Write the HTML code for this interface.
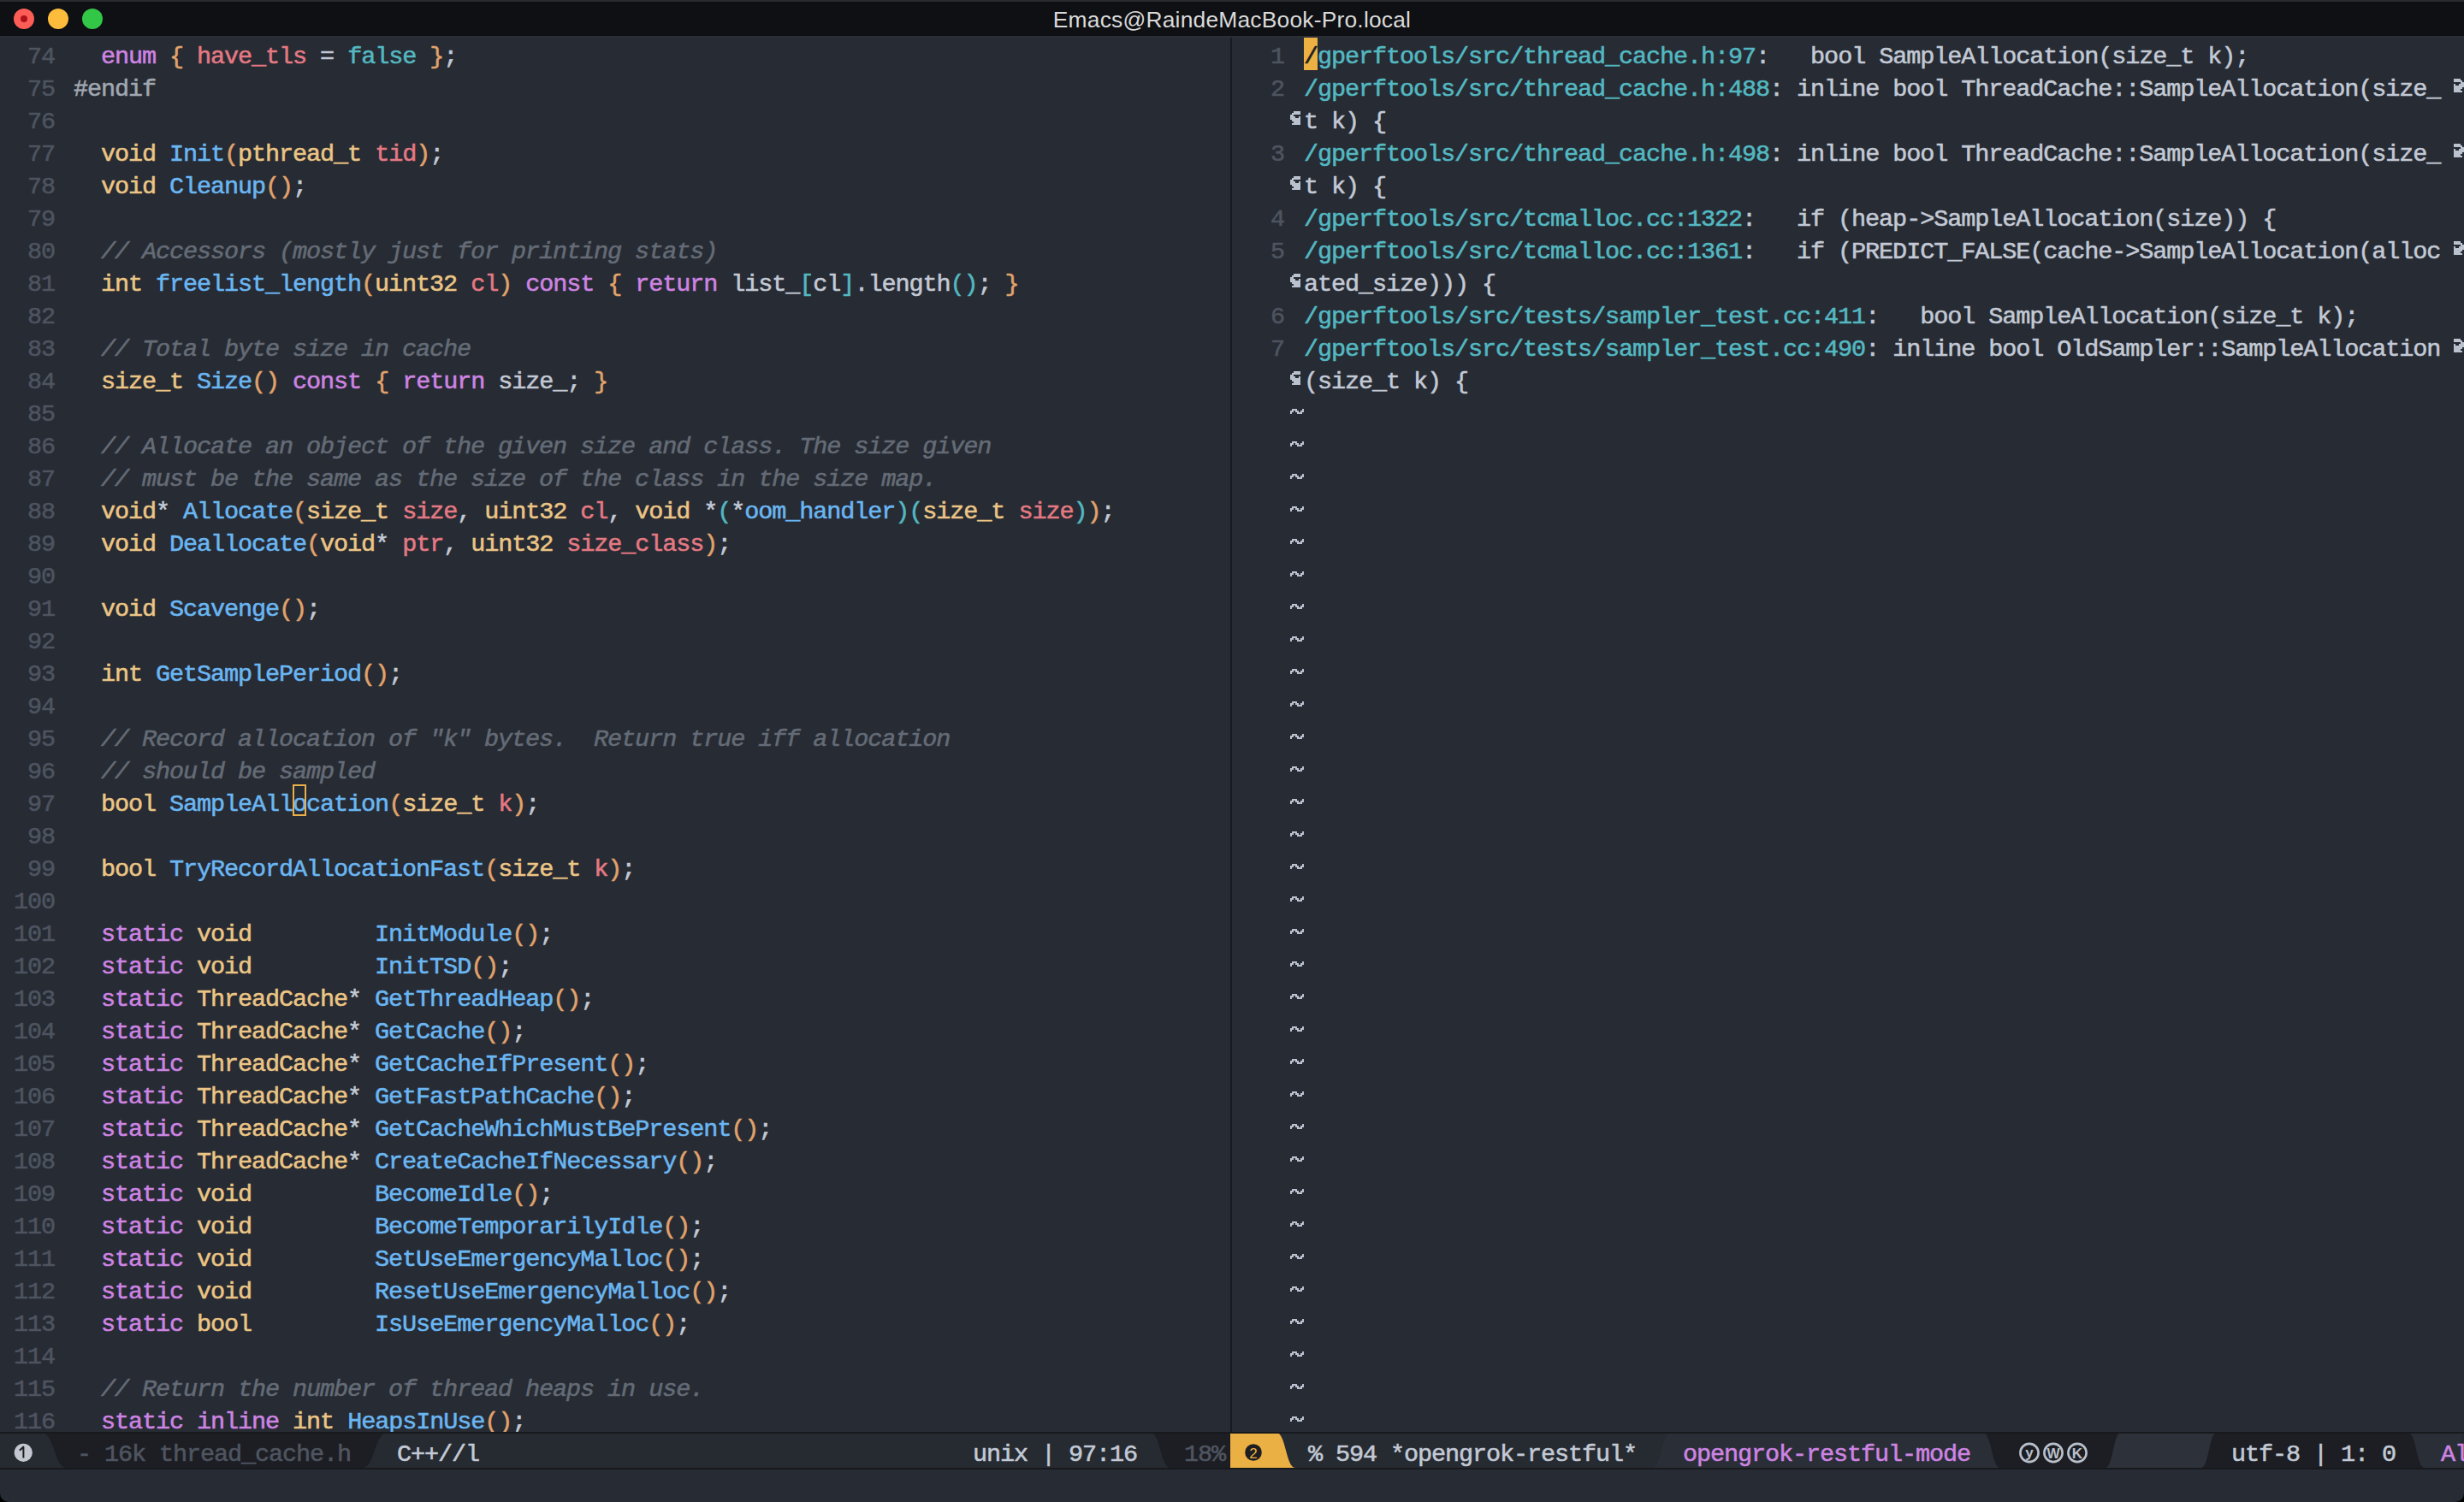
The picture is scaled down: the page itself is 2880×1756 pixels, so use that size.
<!DOCTYPE html>
<html><head><meta charset="utf-8">
<style>
html,body{margin:0;padding:0;}
body{width:2880px;height:1756px;overflow:hidden;background:#272b33;position:relative;font-family:"Liberation Mono",monospace;}
#title{position:absolute;left:0;top:0;width:2880px;height:42px;background:#0f1013;border-top:2px solid #2a2b2f;box-sizing:border-box;}
#title .tt{position:absolute;left:0;width:2880px;top:0px;height:42px;line-height:42px;text-align:center;font-family:"Liberation Sans",sans-serif;font-size:26.4px;letter-spacing:0.2px;color:#dadada;}
.tl{position:absolute;top:8px;width:24px;height:24px;border-radius:50%;}
.row,.ln,.mlt{position:absolute;height:38px;line-height:38px;white-space:pre;font-size:28.5px;letter-spacing:-1.1px;color:#c2c9d5;-webkit-text-stroke:0.55px currentColor;}
.ln{color:#4d5460;}
.mlt{top:1681.5px;}
.dim{color:#4f5560;}
.mag{color:#cd84e2;}
i{font-style:normal;}
.k{color:#cd84e2}.t{color:#ebc585}.f{color:#6ab6f2}.v{color:#e47983}.c{color:#53b8c1}
.o{color:#e0a36c}.g{color:#53b8c1}.m{color:#646b76;font-style:italic}.pp{color:#a0a7b1}
.cur{color:#6ab6f2;}
.rc{color:#1c1f24;}
.bm{position:absolute;}
#split{position:absolute;left:1438px;top:42px;width:2px;height:1632px;background:#171a21;}
#tline{position:absolute;left:0;top:42px;width:2880px;height:2px;background:#2b2e36;}
#echo{position:absolute;left:0;top:1718px;width:2880px;height:38px;background:#272b33;}
</style></head><body>
<div id="title"><div class="tl" style="left:16px;background:#fd5d57"><div style="position:absolute;left:8px;top:8px;width:8px;height:8px;border-radius:50%;background:#b0121a"></div></div><div class="tl" style="left:56px;background:#fdbc3c"></div><div class="tl" style="left:96px;background:#33c748"></div><div class="tt">Emacs@RaindeMacBook-Pro.local</div></div>
<div style="position:absolute;left:1524px;top:44px;width:16px;height:38px;background:#ecb142"></div>
<div class="ln" style="top:48px;left:16px"> 74</div>
<div class="row" style="top:48px;left:86px">  <i class="k">enum</i> <i class="o">{</i> <i class="v">have_tls</i> = <i class="c">false</i> <i class="o">}</i>;</div>
<div class="ln" style="top:86px;left:16px"> 75</div>
<div class="row" style="top:86px;left:86px"><i class="pp">#endif</i></div>
<div class="ln" style="top:124px;left:16px"> 76</div>
<div class="ln" style="top:162px;left:16px"> 77</div>
<div class="row" style="top:162px;left:86px">  <i class="t">void</i> <i class="f">Init</i><i class="o">(</i><i class="t">pthread_t</i> <i class="v">tid</i><i class="o">)</i>;</div>
<div class="ln" style="top:200px;left:16px"> 78</div>
<div class="row" style="top:200px;left:86px">  <i class="t">void</i> <i class="f">Cleanup</i><i class="o">()</i>;</div>
<div class="ln" style="top:238px;left:16px"> 79</div>
<div class="ln" style="top:276px;left:16px"> 80</div>
<div class="row" style="top:276px;left:86px">  <i class="m">// Accessors (mostly just for printing stats)</i></div>
<div class="ln" style="top:314px;left:16px"> 81</div>
<div class="row" style="top:314px;left:86px">  <i class="t">int</i> <i class="f">freelist_length</i><i class="o">(</i><i class="t">uint32</i> <i class="v">cl</i><i class="o">)</i> <i class="k">const</i> <i class="o">{</i> <i class="k">return</i> list_<i class="g">[</i>cl<i class="g">]</i>.length<i class="g">()</i>; <i class="o">}</i></div>
<div class="ln" style="top:352px;left:16px"> 82</div>
<div class="ln" style="top:390px;left:16px"> 83</div>
<div class="row" style="top:390px;left:86px">  <i class="m">// Total byte size in cache</i></div>
<div class="ln" style="top:428px;left:16px"> 84</div>
<div class="row" style="top:428px;left:86px">  <i class="t">size_t</i> <i class="f">Size</i><i class="o">()</i> <i class="k">const</i> <i class="o">{</i> <i class="k">return</i> size_; <i class="o">}</i></div>
<div class="ln" style="top:466px;left:16px"> 85</div>
<div class="ln" style="top:504px;left:16px"> 86</div>
<div class="row" style="top:504px;left:86px">  <i class="m">// Allocate an object of the given size and class. The size given</i></div>
<div class="ln" style="top:542px;left:16px"> 87</div>
<div class="row" style="top:542px;left:86px">  <i class="m">// must be the same as the size of the class in the size map.</i></div>
<div class="ln" style="top:580px;left:16px"> 88</div>
<div class="row" style="top:580px;left:86px">  <i class="t">void</i>* <i class="f">Allocate</i><i class="o">(</i><i class="t">size_t</i> <i class="v">size</i>, <i class="t">uint32</i> <i class="v">cl</i>, <i class="t">void</i> *<i class="g">(</i>*<i class="f">oom_handler</i><i class="g">)(</i><i class="t">size_t</i> <i class="v">size</i><i class="g">)</i><i class="o">)</i>;</div>
<div class="ln" style="top:618px;left:16px"> 89</div>
<div class="row" style="top:618px;left:86px">  <i class="t">void</i> <i class="f">Deallocate</i><i class="o">(</i><i class="t">void</i>* <i class="v">ptr</i>, <i class="t">uint32</i> <i class="v">size_class</i><i class="o">)</i>;</div>
<div class="ln" style="top:656px;left:16px"> 90</div>
<div class="ln" style="top:694px;left:16px"> 91</div>
<div class="row" style="top:694px;left:86px">  <i class="t">void</i> <i class="f">Scavenge</i><i class="o">()</i>;</div>
<div class="ln" style="top:732px;left:16px"> 92</div>
<div class="ln" style="top:770px;left:16px"> 93</div>
<div class="row" style="top:770px;left:86px">  <i class="t">int</i> <i class="f">GetSamplePeriod</i><i class="o">()</i>;</div>
<div class="ln" style="top:808px;left:16px"> 94</div>
<div class="ln" style="top:846px;left:16px"> 95</div>
<div class="row" style="top:846px;left:86px">  <i class="m">// Record allocation of &quot;k&quot; bytes.  Return true iff allocation</i></div>
<div class="ln" style="top:884px;left:16px"> 96</div>
<div class="row" style="top:884px;left:86px">  <i class="m">// should be sampled</i></div>
<div class="ln" style="top:922px;left:16px"> 97</div>
<div class="row" style="top:922px;left:86px">  <i class="t">bool</i> <i class="f">SampleAll</i><i class="cur">o</i><i class="f">cation</i><i class="o">(</i><i class="t">size_t</i> <i class="v">k</i><i class="o">)</i>;</div>
<div class="ln" style="top:960px;left:16px"> 98</div>
<div class="ln" style="top:998px;left:16px"> 99</div>
<div class="row" style="top:998px;left:86px">  <i class="t">bool</i> <i class="f">TryRecordAllocationFast</i><i class="o">(</i><i class="t">size_t</i> <i class="v">k</i><i class="o">)</i>;</div>
<div class="ln" style="top:1036px;left:16px">100</div>
<div class="ln" style="top:1074px;left:16px">101</div>
<div class="row" style="top:1074px;left:86px">  <i class="k">static</i> <i class="t">void</i>         <i class="f">InitModule</i><i class="o">()</i>;</div>
<div class="ln" style="top:1112px;left:16px">102</div>
<div class="row" style="top:1112px;left:86px">  <i class="k">static</i> <i class="t">void</i>         <i class="f">InitTSD</i><i class="o">()</i>;</div>
<div class="ln" style="top:1150px;left:16px">103</div>
<div class="row" style="top:1150px;left:86px">  <i class="k">static</i> <i class="t">ThreadCache</i>* <i class="f">GetThreadHeap</i><i class="o">()</i>;</div>
<div class="ln" style="top:1188px;left:16px">104</div>
<div class="row" style="top:1188px;left:86px">  <i class="k">static</i> <i class="t">ThreadCache</i>* <i class="f">GetCache</i><i class="o">()</i>;</div>
<div class="ln" style="top:1226px;left:16px">105</div>
<div class="row" style="top:1226px;left:86px">  <i class="k">static</i> <i class="t">ThreadCache</i>* <i class="f">GetCacheIfPresent</i><i class="o">()</i>;</div>
<div class="ln" style="top:1264px;left:16px">106</div>
<div class="row" style="top:1264px;left:86px">  <i class="k">static</i> <i class="t">ThreadCache</i>* <i class="f">GetFastPathCache</i><i class="o">()</i>;</div>
<div class="ln" style="top:1302px;left:16px">107</div>
<div class="row" style="top:1302px;left:86px">  <i class="k">static</i> <i class="t">ThreadCache</i>* <i class="f">GetCacheWhichMustBePresent</i><i class="o">()</i>;</div>
<div class="ln" style="top:1340px;left:16px">108</div>
<div class="row" style="top:1340px;left:86px">  <i class="k">static</i> <i class="t">ThreadCache</i>* <i class="f">CreateCacheIfNecessary</i><i class="o">()</i>;</div>
<div class="ln" style="top:1378px;left:16px">109</div>
<div class="row" style="top:1378px;left:86px">  <i class="k">static</i> <i class="t">void</i>         <i class="f">BecomeIdle</i><i class="o">()</i>;</div>
<div class="ln" style="top:1416px;left:16px">110</div>
<div class="row" style="top:1416px;left:86px">  <i class="k">static</i> <i class="t">void</i>         <i class="f">BecomeTemporarilyIdle</i><i class="o">()</i>;</div>
<div class="ln" style="top:1454px;left:16px">111</div>
<div class="row" style="top:1454px;left:86px">  <i class="k">static</i> <i class="t">void</i>         <i class="f">SetUseEmergencyMalloc</i><i class="o">()</i>;</div>
<div class="ln" style="top:1492px;left:16px">112</div>
<div class="row" style="top:1492px;left:86px">  <i class="k">static</i> <i class="t">void</i>         <i class="f">ResetUseEmergencyMalloc</i><i class="o">()</i>;</div>
<div class="ln" style="top:1530px;left:16px">113</div>
<div class="row" style="top:1530px;left:86px">  <i class="k">static</i> <i class="t">bool</i>         <i class="f">IsUseEmergencyMalloc</i><i class="o">()</i>;</div>
<div class="ln" style="top:1568px;left:16px">114</div>
<div class="ln" style="top:1606px;left:16px">115</div>
<div class="row" style="top:1606px;left:86px">  <i class="m">// Return the number of thread heaps in use.</i></div>
<div class="ln" style="top:1644px;left:16px">116</div>
<div class="row" style="top:1644px;left:86px">  <i class="k">static</i> <i class="k">inline</i> <i class="t">int</i> <i class="f">HeapsInUse</i><i class="o">()</i>;</div>
<div class="ln" style="top:48px;left:1453px">  1</div>
<div class="row" style="top:48px;left:1524px"><i class="rc">/</i><i class="c">gperftools/src/thread_cache.h:97</i>:   bool SampleAllocation(size_t k);</div>
<div class="ln" style="top:86px;left:1453px">  2</div>
<div class="row" style="top:86px;left:1524px"><i class="c">/gperftools/src/thread_cache.h:488</i>: inline bool ThreadCache::SampleAllocation(size_</div>
<svg class="bm" style="left:2864px;top:92px" width="16" height="16" fill="#bbc2cf"><rect x="4" y="0" width="2" height="2"/><rect x="6" y="0" width="2" height="2"/><rect x="8" y="0" width="2" height="2"/><rect x="10" y="0" width="2" height="2"/><rect x="4" y="2" width="2" height="2"/><rect x="6" y="2" width="2" height="2"/><rect x="8" y="2" width="2" height="2"/><rect x="10" y="2" width="2" height="2"/><rect x="12" y="2" width="2" height="2"/><rect x="12" y="4" width="2" height="2"/><rect x="14" y="4" width="2" height="2"/><rect x="4" y="6" width="2" height="2"/><rect x="10" y="6" width="2" height="2"/><rect x="12" y="6" width="2" height="2"/><rect x="14" y="6" width="2" height="2"/><rect x="4" y="8" width="2" height="2"/><rect x="6" y="8" width="2" height="2"/><rect x="8" y="8" width="2" height="2"/><rect x="10" y="8" width="2" height="2"/><rect x="12" y="8" width="2" height="2"/><rect x="14" y="8" width="2" height="2"/><rect x="4" y="10" width="2" height="2"/><rect x="6" y="10" width="2" height="2"/><rect x="8" y="10" width="2" height="2"/><rect x="10" y="10" width="2" height="2"/><rect x="12" y="10" width="2" height="2"/><rect x="4" y="12" width="2" height="2"/><rect x="6" y="12" width="2" height="2"/><rect x="8" y="12" width="2" height="2"/><rect x="10" y="12" width="2" height="2"/><rect x="4" y="14" width="2" height="2"/><rect x="6" y="14" width="2" height="2"/><rect x="8" y="14" width="2" height="2"/><rect x="10" y="14" width="2" height="2"/><rect x="12" y="14" width="2" height="2"/></svg>
<svg class="bm" style="left:1508px;top:130px" width="16" height="16" fill="#bbc2cf"><rect x="4" y="0" width="2" height="2"/><rect x="6" y="0" width="2" height="2"/><rect x="8" y="0" width="2" height="2"/><rect x="10" y="0" width="2" height="2"/><rect x="2" y="2" width="2" height="2"/><rect x="4" y="2" width="2" height="2"/><rect x="6" y="2" width="2" height="2"/><rect x="8" y="2" width="2" height="2"/><rect x="10" y="2" width="2" height="2"/><rect x="0" y="4" width="2" height="2"/><rect x="2" y="4" width="2" height="2"/><rect x="0" y="6" width="2" height="2"/><rect x="2" y="6" width="2" height="2"/><rect x="4" y="6" width="2" height="2"/><rect x="10" y="6" width="2" height="2"/><rect x="0" y="8" width="2" height="2"/><rect x="2" y="8" width="2" height="2"/><rect x="4" y="8" width="2" height="2"/><rect x="6" y="8" width="2" height="2"/><rect x="8" y="8" width="2" height="2"/><rect x="10" y="8" width="2" height="2"/><rect x="2" y="10" width="2" height="2"/><rect x="4" y="10" width="2" height="2"/><rect x="6" y="10" width="2" height="2"/><rect x="8" y="10" width="2" height="2"/><rect x="10" y="10" width="2" height="2"/><rect x="4" y="12" width="2" height="2"/><rect x="6" y="12" width="2" height="2"/><rect x="8" y="12" width="2" height="2"/><rect x="10" y="12" width="2" height="2"/><rect x="2" y="14" width="2" height="2"/><rect x="4" y="14" width="2" height="2"/><rect x="6" y="14" width="2" height="2"/><rect x="8" y="14" width="2" height="2"/><rect x="10" y="14" width="2" height="2"/></svg>
<div class="row" style="top:124px;left:1524px">t k) {</div>
<div class="ln" style="top:162px;left:1453px">  3</div>
<div class="row" style="top:162px;left:1524px"><i class="c">/gperftools/src/thread_cache.h:498</i>: inline bool ThreadCache::SampleAllocation(size_</div>
<svg class="bm" style="left:2864px;top:168px" width="16" height="16" fill="#bbc2cf"><rect x="4" y="0" width="2" height="2"/><rect x="6" y="0" width="2" height="2"/><rect x="8" y="0" width="2" height="2"/><rect x="10" y="0" width="2" height="2"/><rect x="4" y="2" width="2" height="2"/><rect x="6" y="2" width="2" height="2"/><rect x="8" y="2" width="2" height="2"/><rect x="10" y="2" width="2" height="2"/><rect x="12" y="2" width="2" height="2"/><rect x="12" y="4" width="2" height="2"/><rect x="14" y="4" width="2" height="2"/><rect x="4" y="6" width="2" height="2"/><rect x="10" y="6" width="2" height="2"/><rect x="12" y="6" width="2" height="2"/><rect x="14" y="6" width="2" height="2"/><rect x="4" y="8" width="2" height="2"/><rect x="6" y="8" width="2" height="2"/><rect x="8" y="8" width="2" height="2"/><rect x="10" y="8" width="2" height="2"/><rect x="12" y="8" width="2" height="2"/><rect x="14" y="8" width="2" height="2"/><rect x="4" y="10" width="2" height="2"/><rect x="6" y="10" width="2" height="2"/><rect x="8" y="10" width="2" height="2"/><rect x="10" y="10" width="2" height="2"/><rect x="12" y="10" width="2" height="2"/><rect x="4" y="12" width="2" height="2"/><rect x="6" y="12" width="2" height="2"/><rect x="8" y="12" width="2" height="2"/><rect x="10" y="12" width="2" height="2"/><rect x="4" y="14" width="2" height="2"/><rect x="6" y="14" width="2" height="2"/><rect x="8" y="14" width="2" height="2"/><rect x="10" y="14" width="2" height="2"/><rect x="12" y="14" width="2" height="2"/></svg>
<svg class="bm" style="left:1508px;top:206px" width="16" height="16" fill="#bbc2cf"><rect x="4" y="0" width="2" height="2"/><rect x="6" y="0" width="2" height="2"/><rect x="8" y="0" width="2" height="2"/><rect x="10" y="0" width="2" height="2"/><rect x="2" y="2" width="2" height="2"/><rect x="4" y="2" width="2" height="2"/><rect x="6" y="2" width="2" height="2"/><rect x="8" y="2" width="2" height="2"/><rect x="10" y="2" width="2" height="2"/><rect x="0" y="4" width="2" height="2"/><rect x="2" y="4" width="2" height="2"/><rect x="0" y="6" width="2" height="2"/><rect x="2" y="6" width="2" height="2"/><rect x="4" y="6" width="2" height="2"/><rect x="10" y="6" width="2" height="2"/><rect x="0" y="8" width="2" height="2"/><rect x="2" y="8" width="2" height="2"/><rect x="4" y="8" width="2" height="2"/><rect x="6" y="8" width="2" height="2"/><rect x="8" y="8" width="2" height="2"/><rect x="10" y="8" width="2" height="2"/><rect x="2" y="10" width="2" height="2"/><rect x="4" y="10" width="2" height="2"/><rect x="6" y="10" width="2" height="2"/><rect x="8" y="10" width="2" height="2"/><rect x="10" y="10" width="2" height="2"/><rect x="4" y="12" width="2" height="2"/><rect x="6" y="12" width="2" height="2"/><rect x="8" y="12" width="2" height="2"/><rect x="10" y="12" width="2" height="2"/><rect x="2" y="14" width="2" height="2"/><rect x="4" y="14" width="2" height="2"/><rect x="6" y="14" width="2" height="2"/><rect x="8" y="14" width="2" height="2"/><rect x="10" y="14" width="2" height="2"/></svg>
<div class="row" style="top:200px;left:1524px">t k) {</div>
<div class="ln" style="top:238px;left:1453px">  4</div>
<div class="row" style="top:238px;left:1524px"><i class="c">/gperftools/src/tcmalloc.cc:1322</i>:   if (heap-&gt;SampleAllocation(size)) {</div>
<div class="ln" style="top:276px;left:1453px">  5</div>
<div class="row" style="top:276px;left:1524px"><i class="c">/gperftools/src/tcmalloc.cc:1361</i>:   if (PREDICT_FALSE(cache-&gt;SampleAllocation(alloc</div>
<svg class="bm" style="left:2864px;top:282px" width="16" height="16" fill="#bbc2cf"><rect x="4" y="0" width="2" height="2"/><rect x="6" y="0" width="2" height="2"/><rect x="8" y="0" width="2" height="2"/><rect x="10" y="0" width="2" height="2"/><rect x="4" y="2" width="2" height="2"/><rect x="6" y="2" width="2" height="2"/><rect x="8" y="2" width="2" height="2"/><rect x="10" y="2" width="2" height="2"/><rect x="12" y="2" width="2" height="2"/><rect x="12" y="4" width="2" height="2"/><rect x="14" y="4" width="2" height="2"/><rect x="4" y="6" width="2" height="2"/><rect x="10" y="6" width="2" height="2"/><rect x="12" y="6" width="2" height="2"/><rect x="14" y="6" width="2" height="2"/><rect x="4" y="8" width="2" height="2"/><rect x="6" y="8" width="2" height="2"/><rect x="8" y="8" width="2" height="2"/><rect x="10" y="8" width="2" height="2"/><rect x="12" y="8" width="2" height="2"/><rect x="14" y="8" width="2" height="2"/><rect x="4" y="10" width="2" height="2"/><rect x="6" y="10" width="2" height="2"/><rect x="8" y="10" width="2" height="2"/><rect x="10" y="10" width="2" height="2"/><rect x="12" y="10" width="2" height="2"/><rect x="4" y="12" width="2" height="2"/><rect x="6" y="12" width="2" height="2"/><rect x="8" y="12" width="2" height="2"/><rect x="10" y="12" width="2" height="2"/><rect x="4" y="14" width="2" height="2"/><rect x="6" y="14" width="2" height="2"/><rect x="8" y="14" width="2" height="2"/><rect x="10" y="14" width="2" height="2"/><rect x="12" y="14" width="2" height="2"/></svg>
<svg class="bm" style="left:1508px;top:320px" width="16" height="16" fill="#bbc2cf"><rect x="4" y="0" width="2" height="2"/><rect x="6" y="0" width="2" height="2"/><rect x="8" y="0" width="2" height="2"/><rect x="10" y="0" width="2" height="2"/><rect x="2" y="2" width="2" height="2"/><rect x="4" y="2" width="2" height="2"/><rect x="6" y="2" width="2" height="2"/><rect x="8" y="2" width="2" height="2"/><rect x="10" y="2" width="2" height="2"/><rect x="0" y="4" width="2" height="2"/><rect x="2" y="4" width="2" height="2"/><rect x="0" y="6" width="2" height="2"/><rect x="2" y="6" width="2" height="2"/><rect x="4" y="6" width="2" height="2"/><rect x="10" y="6" width="2" height="2"/><rect x="0" y="8" width="2" height="2"/><rect x="2" y="8" width="2" height="2"/><rect x="4" y="8" width="2" height="2"/><rect x="6" y="8" width="2" height="2"/><rect x="8" y="8" width="2" height="2"/><rect x="10" y="8" width="2" height="2"/><rect x="2" y="10" width="2" height="2"/><rect x="4" y="10" width="2" height="2"/><rect x="6" y="10" width="2" height="2"/><rect x="8" y="10" width="2" height="2"/><rect x="10" y="10" width="2" height="2"/><rect x="4" y="12" width="2" height="2"/><rect x="6" y="12" width="2" height="2"/><rect x="8" y="12" width="2" height="2"/><rect x="10" y="12" width="2" height="2"/><rect x="2" y="14" width="2" height="2"/><rect x="4" y="14" width="2" height="2"/><rect x="6" y="14" width="2" height="2"/><rect x="8" y="14" width="2" height="2"/><rect x="10" y="14" width="2" height="2"/></svg>
<div class="row" style="top:314px;left:1524px">ated_size))) {</div>
<div class="ln" style="top:352px;left:1453px">  6</div>
<div class="row" style="top:352px;left:1524px"><i class="c">/gperftools/src/tests/sampler_test.cc:411</i>:   bool SampleAllocation(size_t k);</div>
<div class="ln" style="top:390px;left:1453px">  7</div>
<div class="row" style="top:390px;left:1524px"><i class="c">/gperftools/src/tests/sampler_test.cc:490</i>: inline bool OldSampler::SampleAllocation</div>
<svg class="bm" style="left:2864px;top:396px" width="16" height="16" fill="#bbc2cf"><rect x="4" y="0" width="2" height="2"/><rect x="6" y="0" width="2" height="2"/><rect x="8" y="0" width="2" height="2"/><rect x="10" y="0" width="2" height="2"/><rect x="4" y="2" width="2" height="2"/><rect x="6" y="2" width="2" height="2"/><rect x="8" y="2" width="2" height="2"/><rect x="10" y="2" width="2" height="2"/><rect x="12" y="2" width="2" height="2"/><rect x="12" y="4" width="2" height="2"/><rect x="14" y="4" width="2" height="2"/><rect x="4" y="6" width="2" height="2"/><rect x="10" y="6" width="2" height="2"/><rect x="12" y="6" width="2" height="2"/><rect x="14" y="6" width="2" height="2"/><rect x="4" y="8" width="2" height="2"/><rect x="6" y="8" width="2" height="2"/><rect x="8" y="8" width="2" height="2"/><rect x="10" y="8" width="2" height="2"/><rect x="12" y="8" width="2" height="2"/><rect x="14" y="8" width="2" height="2"/><rect x="4" y="10" width="2" height="2"/><rect x="6" y="10" width="2" height="2"/><rect x="8" y="10" width="2" height="2"/><rect x="10" y="10" width="2" height="2"/><rect x="12" y="10" width="2" height="2"/><rect x="4" y="12" width="2" height="2"/><rect x="6" y="12" width="2" height="2"/><rect x="8" y="12" width="2" height="2"/><rect x="10" y="12" width="2" height="2"/><rect x="4" y="14" width="2" height="2"/><rect x="6" y="14" width="2" height="2"/><rect x="8" y="14" width="2" height="2"/><rect x="10" y="14" width="2" height="2"/><rect x="12" y="14" width="2" height="2"/></svg>
<svg class="bm" style="left:1508px;top:434px" width="16" height="16" fill="#bbc2cf"><rect x="4" y="0" width="2" height="2"/><rect x="6" y="0" width="2" height="2"/><rect x="8" y="0" width="2" height="2"/><rect x="10" y="0" width="2" height="2"/><rect x="2" y="2" width="2" height="2"/><rect x="4" y="2" width="2" height="2"/><rect x="6" y="2" width="2" height="2"/><rect x="8" y="2" width="2" height="2"/><rect x="10" y="2" width="2" height="2"/><rect x="0" y="4" width="2" height="2"/><rect x="2" y="4" width="2" height="2"/><rect x="0" y="6" width="2" height="2"/><rect x="2" y="6" width="2" height="2"/><rect x="4" y="6" width="2" height="2"/><rect x="10" y="6" width="2" height="2"/><rect x="0" y="8" width="2" height="2"/><rect x="2" y="8" width="2" height="2"/><rect x="4" y="8" width="2" height="2"/><rect x="6" y="8" width="2" height="2"/><rect x="8" y="8" width="2" height="2"/><rect x="10" y="8" width="2" height="2"/><rect x="2" y="10" width="2" height="2"/><rect x="4" y="10" width="2" height="2"/><rect x="6" y="10" width="2" height="2"/><rect x="8" y="10" width="2" height="2"/><rect x="10" y="10" width="2" height="2"/><rect x="4" y="12" width="2" height="2"/><rect x="6" y="12" width="2" height="2"/><rect x="8" y="12" width="2" height="2"/><rect x="10" y="12" width="2" height="2"/><rect x="2" y="14" width="2" height="2"/><rect x="4" y="14" width="2" height="2"/><rect x="6" y="14" width="2" height="2"/><rect x="8" y="14" width="2" height="2"/><rect x="10" y="14" width="2" height="2"/></svg>
<div class="row" style="top:428px;left:1524px">(size_t k) {</div>
<svg class="bm" style="left:1508px;top:478px" width="16" height="6" fill="#bbc2cf"><rect x="2" y="0" width="2" height="2"/><rect x="4" y="0" width="2" height="2"/><rect x="6" y="0" width="2" height="2"/><rect x="14" y="0" width="2" height="2"/><rect x="0" y="2" width="2" height="2"/><rect x="2" y="2" width="2" height="2"/><rect x="6" y="2" width="2" height="2"/><rect x="8" y="2" width="2" height="2"/><rect x="12" y="2" width="2" height="2"/><rect x="14" y="2" width="2" height="2"/><rect x="0" y="4" width="2" height="2"/><rect x="8" y="4" width="2" height="2"/><rect x="10" y="4" width="2" height="2"/><rect x="12" y="4" width="2" height="2"/></svg>
<svg class="bm" style="left:1508px;top:516px" width="16" height="6" fill="#bbc2cf"><rect x="2" y="0" width="2" height="2"/><rect x="4" y="0" width="2" height="2"/><rect x="6" y="0" width="2" height="2"/><rect x="14" y="0" width="2" height="2"/><rect x="0" y="2" width="2" height="2"/><rect x="2" y="2" width="2" height="2"/><rect x="6" y="2" width="2" height="2"/><rect x="8" y="2" width="2" height="2"/><rect x="12" y="2" width="2" height="2"/><rect x="14" y="2" width="2" height="2"/><rect x="0" y="4" width="2" height="2"/><rect x="8" y="4" width="2" height="2"/><rect x="10" y="4" width="2" height="2"/><rect x="12" y="4" width="2" height="2"/></svg>
<svg class="bm" style="left:1508px;top:554px" width="16" height="6" fill="#bbc2cf"><rect x="2" y="0" width="2" height="2"/><rect x="4" y="0" width="2" height="2"/><rect x="6" y="0" width="2" height="2"/><rect x="14" y="0" width="2" height="2"/><rect x="0" y="2" width="2" height="2"/><rect x="2" y="2" width="2" height="2"/><rect x="6" y="2" width="2" height="2"/><rect x="8" y="2" width="2" height="2"/><rect x="12" y="2" width="2" height="2"/><rect x="14" y="2" width="2" height="2"/><rect x="0" y="4" width="2" height="2"/><rect x="8" y="4" width="2" height="2"/><rect x="10" y="4" width="2" height="2"/><rect x="12" y="4" width="2" height="2"/></svg>
<svg class="bm" style="left:1508px;top:592px" width="16" height="6" fill="#bbc2cf"><rect x="2" y="0" width="2" height="2"/><rect x="4" y="0" width="2" height="2"/><rect x="6" y="0" width="2" height="2"/><rect x="14" y="0" width="2" height="2"/><rect x="0" y="2" width="2" height="2"/><rect x="2" y="2" width="2" height="2"/><rect x="6" y="2" width="2" height="2"/><rect x="8" y="2" width="2" height="2"/><rect x="12" y="2" width="2" height="2"/><rect x="14" y="2" width="2" height="2"/><rect x="0" y="4" width="2" height="2"/><rect x="8" y="4" width="2" height="2"/><rect x="10" y="4" width="2" height="2"/><rect x="12" y="4" width="2" height="2"/></svg>
<svg class="bm" style="left:1508px;top:630px" width="16" height="6" fill="#bbc2cf"><rect x="2" y="0" width="2" height="2"/><rect x="4" y="0" width="2" height="2"/><rect x="6" y="0" width="2" height="2"/><rect x="14" y="0" width="2" height="2"/><rect x="0" y="2" width="2" height="2"/><rect x="2" y="2" width="2" height="2"/><rect x="6" y="2" width="2" height="2"/><rect x="8" y="2" width="2" height="2"/><rect x="12" y="2" width="2" height="2"/><rect x="14" y="2" width="2" height="2"/><rect x="0" y="4" width="2" height="2"/><rect x="8" y="4" width="2" height="2"/><rect x="10" y="4" width="2" height="2"/><rect x="12" y="4" width="2" height="2"/></svg>
<svg class="bm" style="left:1508px;top:668px" width="16" height="6" fill="#bbc2cf"><rect x="2" y="0" width="2" height="2"/><rect x="4" y="0" width="2" height="2"/><rect x="6" y="0" width="2" height="2"/><rect x="14" y="0" width="2" height="2"/><rect x="0" y="2" width="2" height="2"/><rect x="2" y="2" width="2" height="2"/><rect x="6" y="2" width="2" height="2"/><rect x="8" y="2" width="2" height="2"/><rect x="12" y="2" width="2" height="2"/><rect x="14" y="2" width="2" height="2"/><rect x="0" y="4" width="2" height="2"/><rect x="8" y="4" width="2" height="2"/><rect x="10" y="4" width="2" height="2"/><rect x="12" y="4" width="2" height="2"/></svg>
<svg class="bm" style="left:1508px;top:706px" width="16" height="6" fill="#bbc2cf"><rect x="2" y="0" width="2" height="2"/><rect x="4" y="0" width="2" height="2"/><rect x="6" y="0" width="2" height="2"/><rect x="14" y="0" width="2" height="2"/><rect x="0" y="2" width="2" height="2"/><rect x="2" y="2" width="2" height="2"/><rect x="6" y="2" width="2" height="2"/><rect x="8" y="2" width="2" height="2"/><rect x="12" y="2" width="2" height="2"/><rect x="14" y="2" width="2" height="2"/><rect x="0" y="4" width="2" height="2"/><rect x="8" y="4" width="2" height="2"/><rect x="10" y="4" width="2" height="2"/><rect x="12" y="4" width="2" height="2"/></svg>
<svg class="bm" style="left:1508px;top:744px" width="16" height="6" fill="#bbc2cf"><rect x="2" y="0" width="2" height="2"/><rect x="4" y="0" width="2" height="2"/><rect x="6" y="0" width="2" height="2"/><rect x="14" y="0" width="2" height="2"/><rect x="0" y="2" width="2" height="2"/><rect x="2" y="2" width="2" height="2"/><rect x="6" y="2" width="2" height="2"/><rect x="8" y="2" width="2" height="2"/><rect x="12" y="2" width="2" height="2"/><rect x="14" y="2" width="2" height="2"/><rect x="0" y="4" width="2" height="2"/><rect x="8" y="4" width="2" height="2"/><rect x="10" y="4" width="2" height="2"/><rect x="12" y="4" width="2" height="2"/></svg>
<svg class="bm" style="left:1508px;top:782px" width="16" height="6" fill="#bbc2cf"><rect x="2" y="0" width="2" height="2"/><rect x="4" y="0" width="2" height="2"/><rect x="6" y="0" width="2" height="2"/><rect x="14" y="0" width="2" height="2"/><rect x="0" y="2" width="2" height="2"/><rect x="2" y="2" width="2" height="2"/><rect x="6" y="2" width="2" height="2"/><rect x="8" y="2" width="2" height="2"/><rect x="12" y="2" width="2" height="2"/><rect x="14" y="2" width="2" height="2"/><rect x="0" y="4" width="2" height="2"/><rect x="8" y="4" width="2" height="2"/><rect x="10" y="4" width="2" height="2"/><rect x="12" y="4" width="2" height="2"/></svg>
<svg class="bm" style="left:1508px;top:820px" width="16" height="6" fill="#bbc2cf"><rect x="2" y="0" width="2" height="2"/><rect x="4" y="0" width="2" height="2"/><rect x="6" y="0" width="2" height="2"/><rect x="14" y="0" width="2" height="2"/><rect x="0" y="2" width="2" height="2"/><rect x="2" y="2" width="2" height="2"/><rect x="6" y="2" width="2" height="2"/><rect x="8" y="2" width="2" height="2"/><rect x="12" y="2" width="2" height="2"/><rect x="14" y="2" width="2" height="2"/><rect x="0" y="4" width="2" height="2"/><rect x="8" y="4" width="2" height="2"/><rect x="10" y="4" width="2" height="2"/><rect x="12" y="4" width="2" height="2"/></svg>
<svg class="bm" style="left:1508px;top:858px" width="16" height="6" fill="#bbc2cf"><rect x="2" y="0" width="2" height="2"/><rect x="4" y="0" width="2" height="2"/><rect x="6" y="0" width="2" height="2"/><rect x="14" y="0" width="2" height="2"/><rect x="0" y="2" width="2" height="2"/><rect x="2" y="2" width="2" height="2"/><rect x="6" y="2" width="2" height="2"/><rect x="8" y="2" width="2" height="2"/><rect x="12" y="2" width="2" height="2"/><rect x="14" y="2" width="2" height="2"/><rect x="0" y="4" width="2" height="2"/><rect x="8" y="4" width="2" height="2"/><rect x="10" y="4" width="2" height="2"/><rect x="12" y="4" width="2" height="2"/></svg>
<svg class="bm" style="left:1508px;top:896px" width="16" height="6" fill="#bbc2cf"><rect x="2" y="0" width="2" height="2"/><rect x="4" y="0" width="2" height="2"/><rect x="6" y="0" width="2" height="2"/><rect x="14" y="0" width="2" height="2"/><rect x="0" y="2" width="2" height="2"/><rect x="2" y="2" width="2" height="2"/><rect x="6" y="2" width="2" height="2"/><rect x="8" y="2" width="2" height="2"/><rect x="12" y="2" width="2" height="2"/><rect x="14" y="2" width="2" height="2"/><rect x="0" y="4" width="2" height="2"/><rect x="8" y="4" width="2" height="2"/><rect x="10" y="4" width="2" height="2"/><rect x="12" y="4" width="2" height="2"/></svg>
<svg class="bm" style="left:1508px;top:934px" width="16" height="6" fill="#bbc2cf"><rect x="2" y="0" width="2" height="2"/><rect x="4" y="0" width="2" height="2"/><rect x="6" y="0" width="2" height="2"/><rect x="14" y="0" width="2" height="2"/><rect x="0" y="2" width="2" height="2"/><rect x="2" y="2" width="2" height="2"/><rect x="6" y="2" width="2" height="2"/><rect x="8" y="2" width="2" height="2"/><rect x="12" y="2" width="2" height="2"/><rect x="14" y="2" width="2" height="2"/><rect x="0" y="4" width="2" height="2"/><rect x="8" y="4" width="2" height="2"/><rect x="10" y="4" width="2" height="2"/><rect x="12" y="4" width="2" height="2"/></svg>
<svg class="bm" style="left:1508px;top:972px" width="16" height="6" fill="#bbc2cf"><rect x="2" y="0" width="2" height="2"/><rect x="4" y="0" width="2" height="2"/><rect x="6" y="0" width="2" height="2"/><rect x="14" y="0" width="2" height="2"/><rect x="0" y="2" width="2" height="2"/><rect x="2" y="2" width="2" height="2"/><rect x="6" y="2" width="2" height="2"/><rect x="8" y="2" width="2" height="2"/><rect x="12" y="2" width="2" height="2"/><rect x="14" y="2" width="2" height="2"/><rect x="0" y="4" width="2" height="2"/><rect x="8" y="4" width="2" height="2"/><rect x="10" y="4" width="2" height="2"/><rect x="12" y="4" width="2" height="2"/></svg>
<svg class="bm" style="left:1508px;top:1010px" width="16" height="6" fill="#bbc2cf"><rect x="2" y="0" width="2" height="2"/><rect x="4" y="0" width="2" height="2"/><rect x="6" y="0" width="2" height="2"/><rect x="14" y="0" width="2" height="2"/><rect x="0" y="2" width="2" height="2"/><rect x="2" y="2" width="2" height="2"/><rect x="6" y="2" width="2" height="2"/><rect x="8" y="2" width="2" height="2"/><rect x="12" y="2" width="2" height="2"/><rect x="14" y="2" width="2" height="2"/><rect x="0" y="4" width="2" height="2"/><rect x="8" y="4" width="2" height="2"/><rect x="10" y="4" width="2" height="2"/><rect x="12" y="4" width="2" height="2"/></svg>
<svg class="bm" style="left:1508px;top:1048px" width="16" height="6" fill="#bbc2cf"><rect x="2" y="0" width="2" height="2"/><rect x="4" y="0" width="2" height="2"/><rect x="6" y="0" width="2" height="2"/><rect x="14" y="0" width="2" height="2"/><rect x="0" y="2" width="2" height="2"/><rect x="2" y="2" width="2" height="2"/><rect x="6" y="2" width="2" height="2"/><rect x="8" y="2" width="2" height="2"/><rect x="12" y="2" width="2" height="2"/><rect x="14" y="2" width="2" height="2"/><rect x="0" y="4" width="2" height="2"/><rect x="8" y="4" width="2" height="2"/><rect x="10" y="4" width="2" height="2"/><rect x="12" y="4" width="2" height="2"/></svg>
<svg class="bm" style="left:1508px;top:1086px" width="16" height="6" fill="#bbc2cf"><rect x="2" y="0" width="2" height="2"/><rect x="4" y="0" width="2" height="2"/><rect x="6" y="0" width="2" height="2"/><rect x="14" y="0" width="2" height="2"/><rect x="0" y="2" width="2" height="2"/><rect x="2" y="2" width="2" height="2"/><rect x="6" y="2" width="2" height="2"/><rect x="8" y="2" width="2" height="2"/><rect x="12" y="2" width="2" height="2"/><rect x="14" y="2" width="2" height="2"/><rect x="0" y="4" width="2" height="2"/><rect x="8" y="4" width="2" height="2"/><rect x="10" y="4" width="2" height="2"/><rect x="12" y="4" width="2" height="2"/></svg>
<svg class="bm" style="left:1508px;top:1124px" width="16" height="6" fill="#bbc2cf"><rect x="2" y="0" width="2" height="2"/><rect x="4" y="0" width="2" height="2"/><rect x="6" y="0" width="2" height="2"/><rect x="14" y="0" width="2" height="2"/><rect x="0" y="2" width="2" height="2"/><rect x="2" y="2" width="2" height="2"/><rect x="6" y="2" width="2" height="2"/><rect x="8" y="2" width="2" height="2"/><rect x="12" y="2" width="2" height="2"/><rect x="14" y="2" width="2" height="2"/><rect x="0" y="4" width="2" height="2"/><rect x="8" y="4" width="2" height="2"/><rect x="10" y="4" width="2" height="2"/><rect x="12" y="4" width="2" height="2"/></svg>
<svg class="bm" style="left:1508px;top:1162px" width="16" height="6" fill="#bbc2cf"><rect x="2" y="0" width="2" height="2"/><rect x="4" y="0" width="2" height="2"/><rect x="6" y="0" width="2" height="2"/><rect x="14" y="0" width="2" height="2"/><rect x="0" y="2" width="2" height="2"/><rect x="2" y="2" width="2" height="2"/><rect x="6" y="2" width="2" height="2"/><rect x="8" y="2" width="2" height="2"/><rect x="12" y="2" width="2" height="2"/><rect x="14" y="2" width="2" height="2"/><rect x="0" y="4" width="2" height="2"/><rect x="8" y="4" width="2" height="2"/><rect x="10" y="4" width="2" height="2"/><rect x="12" y="4" width="2" height="2"/></svg>
<svg class="bm" style="left:1508px;top:1200px" width="16" height="6" fill="#bbc2cf"><rect x="2" y="0" width="2" height="2"/><rect x="4" y="0" width="2" height="2"/><rect x="6" y="0" width="2" height="2"/><rect x="14" y="0" width="2" height="2"/><rect x="0" y="2" width="2" height="2"/><rect x="2" y="2" width="2" height="2"/><rect x="6" y="2" width="2" height="2"/><rect x="8" y="2" width="2" height="2"/><rect x="12" y="2" width="2" height="2"/><rect x="14" y="2" width="2" height="2"/><rect x="0" y="4" width="2" height="2"/><rect x="8" y="4" width="2" height="2"/><rect x="10" y="4" width="2" height="2"/><rect x="12" y="4" width="2" height="2"/></svg>
<svg class="bm" style="left:1508px;top:1238px" width="16" height="6" fill="#bbc2cf"><rect x="2" y="0" width="2" height="2"/><rect x="4" y="0" width="2" height="2"/><rect x="6" y="0" width="2" height="2"/><rect x="14" y="0" width="2" height="2"/><rect x="0" y="2" width="2" height="2"/><rect x="2" y="2" width="2" height="2"/><rect x="6" y="2" width="2" height="2"/><rect x="8" y="2" width="2" height="2"/><rect x="12" y="2" width="2" height="2"/><rect x="14" y="2" width="2" height="2"/><rect x="0" y="4" width="2" height="2"/><rect x="8" y="4" width="2" height="2"/><rect x="10" y="4" width="2" height="2"/><rect x="12" y="4" width="2" height="2"/></svg>
<svg class="bm" style="left:1508px;top:1276px" width="16" height="6" fill="#bbc2cf"><rect x="2" y="0" width="2" height="2"/><rect x="4" y="0" width="2" height="2"/><rect x="6" y="0" width="2" height="2"/><rect x="14" y="0" width="2" height="2"/><rect x="0" y="2" width="2" height="2"/><rect x="2" y="2" width="2" height="2"/><rect x="6" y="2" width="2" height="2"/><rect x="8" y="2" width="2" height="2"/><rect x="12" y="2" width="2" height="2"/><rect x="14" y="2" width="2" height="2"/><rect x="0" y="4" width="2" height="2"/><rect x="8" y="4" width="2" height="2"/><rect x="10" y="4" width="2" height="2"/><rect x="12" y="4" width="2" height="2"/></svg>
<svg class="bm" style="left:1508px;top:1314px" width="16" height="6" fill="#bbc2cf"><rect x="2" y="0" width="2" height="2"/><rect x="4" y="0" width="2" height="2"/><rect x="6" y="0" width="2" height="2"/><rect x="14" y="0" width="2" height="2"/><rect x="0" y="2" width="2" height="2"/><rect x="2" y="2" width="2" height="2"/><rect x="6" y="2" width="2" height="2"/><rect x="8" y="2" width="2" height="2"/><rect x="12" y="2" width="2" height="2"/><rect x="14" y="2" width="2" height="2"/><rect x="0" y="4" width="2" height="2"/><rect x="8" y="4" width="2" height="2"/><rect x="10" y="4" width="2" height="2"/><rect x="12" y="4" width="2" height="2"/></svg>
<svg class="bm" style="left:1508px;top:1352px" width="16" height="6" fill="#bbc2cf"><rect x="2" y="0" width="2" height="2"/><rect x="4" y="0" width="2" height="2"/><rect x="6" y="0" width="2" height="2"/><rect x="14" y="0" width="2" height="2"/><rect x="0" y="2" width="2" height="2"/><rect x="2" y="2" width="2" height="2"/><rect x="6" y="2" width="2" height="2"/><rect x="8" y="2" width="2" height="2"/><rect x="12" y="2" width="2" height="2"/><rect x="14" y="2" width="2" height="2"/><rect x="0" y="4" width="2" height="2"/><rect x="8" y="4" width="2" height="2"/><rect x="10" y="4" width="2" height="2"/><rect x="12" y="4" width="2" height="2"/></svg>
<svg class="bm" style="left:1508px;top:1390px" width="16" height="6" fill="#bbc2cf"><rect x="2" y="0" width="2" height="2"/><rect x="4" y="0" width="2" height="2"/><rect x="6" y="0" width="2" height="2"/><rect x="14" y="0" width="2" height="2"/><rect x="0" y="2" width="2" height="2"/><rect x="2" y="2" width="2" height="2"/><rect x="6" y="2" width="2" height="2"/><rect x="8" y="2" width="2" height="2"/><rect x="12" y="2" width="2" height="2"/><rect x="14" y="2" width="2" height="2"/><rect x="0" y="4" width="2" height="2"/><rect x="8" y="4" width="2" height="2"/><rect x="10" y="4" width="2" height="2"/><rect x="12" y="4" width="2" height="2"/></svg>
<svg class="bm" style="left:1508px;top:1428px" width="16" height="6" fill="#bbc2cf"><rect x="2" y="0" width="2" height="2"/><rect x="4" y="0" width="2" height="2"/><rect x="6" y="0" width="2" height="2"/><rect x="14" y="0" width="2" height="2"/><rect x="0" y="2" width="2" height="2"/><rect x="2" y="2" width="2" height="2"/><rect x="6" y="2" width="2" height="2"/><rect x="8" y="2" width="2" height="2"/><rect x="12" y="2" width="2" height="2"/><rect x="14" y="2" width="2" height="2"/><rect x="0" y="4" width="2" height="2"/><rect x="8" y="4" width="2" height="2"/><rect x="10" y="4" width="2" height="2"/><rect x="12" y="4" width="2" height="2"/></svg>
<svg class="bm" style="left:1508px;top:1466px" width="16" height="6" fill="#bbc2cf"><rect x="2" y="0" width="2" height="2"/><rect x="4" y="0" width="2" height="2"/><rect x="6" y="0" width="2" height="2"/><rect x="14" y="0" width="2" height="2"/><rect x="0" y="2" width="2" height="2"/><rect x="2" y="2" width="2" height="2"/><rect x="6" y="2" width="2" height="2"/><rect x="8" y="2" width="2" height="2"/><rect x="12" y="2" width="2" height="2"/><rect x="14" y="2" width="2" height="2"/><rect x="0" y="4" width="2" height="2"/><rect x="8" y="4" width="2" height="2"/><rect x="10" y="4" width="2" height="2"/><rect x="12" y="4" width="2" height="2"/></svg>
<svg class="bm" style="left:1508px;top:1504px" width="16" height="6" fill="#bbc2cf"><rect x="2" y="0" width="2" height="2"/><rect x="4" y="0" width="2" height="2"/><rect x="6" y="0" width="2" height="2"/><rect x="14" y="0" width="2" height="2"/><rect x="0" y="2" width="2" height="2"/><rect x="2" y="2" width="2" height="2"/><rect x="6" y="2" width="2" height="2"/><rect x="8" y="2" width="2" height="2"/><rect x="12" y="2" width="2" height="2"/><rect x="14" y="2" width="2" height="2"/><rect x="0" y="4" width="2" height="2"/><rect x="8" y="4" width="2" height="2"/><rect x="10" y="4" width="2" height="2"/><rect x="12" y="4" width="2" height="2"/></svg>
<svg class="bm" style="left:1508px;top:1542px" width="16" height="6" fill="#bbc2cf"><rect x="2" y="0" width="2" height="2"/><rect x="4" y="0" width="2" height="2"/><rect x="6" y="0" width="2" height="2"/><rect x="14" y="0" width="2" height="2"/><rect x="0" y="2" width="2" height="2"/><rect x="2" y="2" width="2" height="2"/><rect x="6" y="2" width="2" height="2"/><rect x="8" y="2" width="2" height="2"/><rect x="12" y="2" width="2" height="2"/><rect x="14" y="2" width="2" height="2"/><rect x="0" y="4" width="2" height="2"/><rect x="8" y="4" width="2" height="2"/><rect x="10" y="4" width="2" height="2"/><rect x="12" y="4" width="2" height="2"/></svg>
<svg class="bm" style="left:1508px;top:1580px" width="16" height="6" fill="#bbc2cf"><rect x="2" y="0" width="2" height="2"/><rect x="4" y="0" width="2" height="2"/><rect x="6" y="0" width="2" height="2"/><rect x="14" y="0" width="2" height="2"/><rect x="0" y="2" width="2" height="2"/><rect x="2" y="2" width="2" height="2"/><rect x="6" y="2" width="2" height="2"/><rect x="8" y="2" width="2" height="2"/><rect x="12" y="2" width="2" height="2"/><rect x="14" y="2" width="2" height="2"/><rect x="0" y="4" width="2" height="2"/><rect x="8" y="4" width="2" height="2"/><rect x="10" y="4" width="2" height="2"/><rect x="12" y="4" width="2" height="2"/></svg>
<svg class="bm" style="left:1508px;top:1618px" width="16" height="6" fill="#bbc2cf"><rect x="2" y="0" width="2" height="2"/><rect x="4" y="0" width="2" height="2"/><rect x="6" y="0" width="2" height="2"/><rect x="14" y="0" width="2" height="2"/><rect x="0" y="2" width="2" height="2"/><rect x="2" y="2" width="2" height="2"/><rect x="6" y="2" width="2" height="2"/><rect x="8" y="2" width="2" height="2"/><rect x="12" y="2" width="2" height="2"/><rect x="14" y="2" width="2" height="2"/><rect x="0" y="4" width="2" height="2"/><rect x="8" y="4" width="2" height="2"/><rect x="10" y="4" width="2" height="2"/><rect x="12" y="4" width="2" height="2"/></svg>
<svg class="bm" style="left:1508px;top:1656px" width="16" height="6" fill="#bbc2cf"><rect x="2" y="0" width="2" height="2"/><rect x="4" y="0" width="2" height="2"/><rect x="6" y="0" width="2" height="2"/><rect x="14" y="0" width="2" height="2"/><rect x="0" y="2" width="2" height="2"/><rect x="2" y="2" width="2" height="2"/><rect x="6" y="2" width="2" height="2"/><rect x="8" y="2" width="2" height="2"/><rect x="12" y="2" width="2" height="2"/><rect x="14" y="2" width="2" height="2"/><rect x="0" y="4" width="2" height="2"/><rect x="8" y="4" width="2" height="2"/><rect x="10" y="4" width="2" height="2"/><rect x="12" y="4" width="2" height="2"/></svg>
<div style="position:absolute;left:342px;top:917px;width:16px;height:37px;box-sizing:border-box;border:2px solid #e8b04a"></div>
<div id="split"></div><div id="tline"></div>
<svg id="mlsvg" width="2880" height="44" style="position:absolute;left:0;top:1674px"><rect x="0" y="0" width="2880" height="44" fill="#262a31"/><path d="M 78 42 C 63.5 42 63.5 1 49 1 L 452 1 C 438 1 438 42 424 42 Z" fill="#1c1e23"/><path d="M 1368 42 C 1356.5 42 1356.5 1 1345 1 L 1438 1 C 1438 1 1438 42 1438 42 Z" fill="#1c1e23"/><path d="M 1438 42 C 1438 42 1438 1 1438 1 L 1492 1 C 1503 1 1503 42 1514 42 Z" fill="#ebb043"/><path d="M 1931 42 C 1942 42 1942 1 1953 1 L 2318 1 C 2328 1 2328 42 2338 42 Z" fill="#2a2e36"/><path d="M 2338 42 C 2328 42 2328 1 2318 1 L 2479 1 C 2470 1 2470 42 2461 42 Z" fill="#1c1e23"/><path d="M 2461 42 C 2470 42 2470 1 2479 1 L 2591 1 C 2582 1 2582 42 2573 42 Z" fill="#2d313a"/><path d="M 2573 42 C 2582 42 2582 1 2591 1 L 2815 1 C 2824.5 1 2824.5 42 2834 42 Z" fill="#1c1e23"/><path d="M 2834 42 C 2824.5 42 2824.5 1 2815 1 L 2877 1 C 2877 1 2877 42 2877 42 Z" fill="#2a2e36"/><rect x="0" y="0" width="2880" height="2" fill="#17191d"/><rect x="0" y="42" width="2880" height="2" fill="#17191d"/><circle cx="27.3" cy="24.3" r="10.6" fill="#c3c8d0"/><path d="M22.9 21.8 L27.4 17.6 L27.4 30.5" fill="none" stroke="#1c1e22" stroke-width="2" stroke-linejoin="round"/><circle cx="1465" cy="24" r="9.8" fill="#1c1e22"/><text x="1465" y="30.5" text-anchor="middle" style="font-family:&quot;Liberation Sans&quot;,sans-serif;font-size:17px" fill="#ebb043">2</text><circle cx="2372" cy="24.5" r="10.6" fill="none" stroke="#b9c0cb" stroke-width="2.6"/><text x="2372" y="29.5" text-anchor="middle" style="font-family:&quot;Liberation Sans&quot;,sans-serif;font-size:17px;font-weight:bold" fill="#b9c0cb">y</text><circle cx="2400" cy="24.5" r="10.6" fill="none" stroke="#b9c0cb" stroke-width="2.6"/><text x="2400" y="30.5" text-anchor="middle" style="font-family:&quot;Liberation Sans&quot;,sans-serif;font-size:16px;font-weight:bold" fill="#b9c0cb">W</text><circle cx="2428" cy="24.5" r="10.6" fill="none" stroke="#b9c0cb" stroke-width="2.6"/><text x="2428" y="30.5" text-anchor="middle" style="font-family:&quot;Liberation Sans&quot;,sans-serif;font-size:17px;font-weight:bold" fill="#b9c0cb">K</text></svg><div class="mlt dim" style="left:90px">- 16k thread_cache.h</div>
<div class="mlt " style="left:464px">C++//l</div>
<div class="mlt " style="left:1137px">unix | 97:16</div>
<div class="mlt dim" style="left:1384px">18%</div>
<div class="mlt " style="left:1529px">% 594 *opengrok-restful*</div>
<div class="mlt mag" style="left:1967px">opengrok-restful-mode</div>
<div class="mlt " style="left:2608px">utf-8 | 1: 0</div>
<div class="mlt mag" style="left:2853px">Al</div>
<div id="echo"></div>
<svg style="position:absolute;left:0;top:1746px" width="10" height="10"><path d="M0 0 A10 10 0 0 0 10 10 L0 10 Z" fill="#000"/></svg><svg style="position:absolute;left:2870px;top:1746px" width="10" height="10"><path d="M10 0 A10 10 0 0 1 0 10 L10 10 Z" fill="#000"/></svg>
</body></html>
